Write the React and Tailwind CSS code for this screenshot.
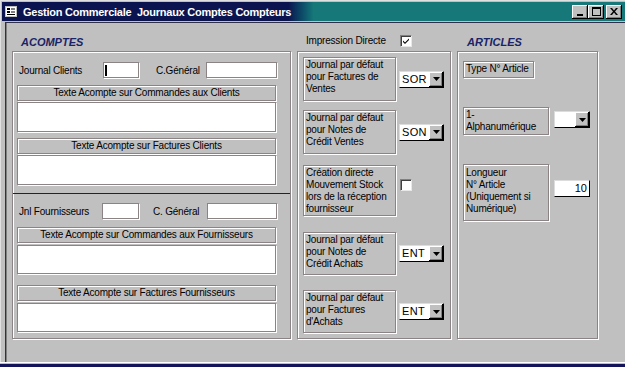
import React from "react";

const etched = "border border-[#8c8484] shadow-[inset_1px_1px_0_#fff,1px_1px_0_#fff]";
const field = "bg-white border border-[#8c8484] shadow-[1px_1px_0_#fff]";

function TitleButton({ children, className = "" }) {
  return (
    <div className={"w-[16px] h-[14px] bg-[#c0c0c0] flex items-center justify-center shadow-[inset_-1px_-1px_0_#000,inset_1px_1px_0_#fff,inset_-2px_-2px_0_#808080] " + className}>
      {children}
    </div>
  );
}

function Combo({ value, w = "w-[45px]" }) {
  return (
    <div className={"h-[17px] bg-white flex border border-[#dcdcdc] border-b-black border-r-black " + w}>
      <div className="flex-1 text-[11px] leading-[15px] pl-[2px] tracking-[0.3px]">{value}</div>
      <div className="w-[14px] h-[15px] bg-[#c0c0c0] flex items-center justify-center shadow-[inset_-1px_-1px_0_#000,inset_1px_1px_0_#fff,inset_-2px_-2px_0_#808080]">
        <svg width="7" height="4" viewBox="0 0 7 4"><path d="M0 0h7L3.5 4z" fill="#000" /></svg>
      </div>
    </div>
  );
}

function Check({ checked }) {
  return (
    <div className="w-[12px] h-[12px] bg-white border border-[#808080] border-b-[#e8e8e8] border-r-[#e8e8e8] shadow-[inset_1px_1px_0_#404040] flex items-center justify-center">
      {checked && (
        <svg width="8" height="8" viewBox="0 0 8 8">
          <path d="M1 3.5 L3 5.5 L7 1.5 L7 3 L3 7 L1 5z" fill="#000" />
        </svg>
      )}
    </div>
  );
}

function Header({ children, className = "" }) {
  return (
    <div className={"ml-[4px] w-[259px] h-[16px] flex items-center justify-center leading-[12px] tracking-[-0.2px] " + etched + " " + className}>
      {children}
    </div>
  );
}

function Area({ className = "" }) {
  return <div className={"ml-[4px] w-[259px] " + field + " " + className} />;
}

function LabelBox({ children, className = "" }) {
  return (
    <div className={"pl-[2px] pt-[1px] leading-[12px] whitespace-nowrap tracking-[-0.2px] " + etched + " " + className}>
      {children}
    </div>
  );
}

export default function App() {
  return (
    <div className="w-[625px] h-[367px] bg-[#c0c0c0] overflow-hidden font-['Liberation_Sans',Arial,sans-serif] text-[10px] text-black">
      <div className="h-[362px] flex flex-col pt-[2px] pl-[2px] shadow-[inset_1px_1px_0_#e0e0e0]">
        {/* Title bar */}
        <div className="h-[19px] flex items-center bg-linear-to-r from-[#0c1450] from-[46%] to-[#167878] to-[50%]">
          <svg className="ml-[3px]" width="12" height="11" viewBox="0 0 12 11">
            <rect x="0.5" y="0.5" width="11" height="10" fill="#fff" stroke="#c0c0c0" />
            <rect x="2" y="2" width="3" height="2" fill="#000" />
            <rect x="6" y="2" width="4" height="2" fill="#808080" />
            <rect x="2" y="5" width="3" height="2" fill="#000" />
            <rect x="6" y="5" width="4" height="2" fill="#808080" />
            <rect x="2" y="8" width="8" height="1" fill="#000" />
          </svg>
          <div className="ml-[6px] text-white font-bold text-[11px] tracking-[-0.25px] whitespace-pre leading-[14px]">
            Gestion Commerciale  Journaux Comptes Compteurs
          </div>
          <div className="ml-auto flex items-center mr-[3px]">
            <TitleButton>
              <svg width="8" height="8" viewBox="0 0 8 8"><rect x="1" y="6" width="6" height="2" fill="#000" /></svg>
            </TitleButton>
            <TitleButton>
              <svg width="9" height="9" viewBox="0 0 9 9"><path d="M0 0h9v9H0z M1 2v6h7V2z" fill="#000" fillRule="evenodd" /></svg>
            </TitleButton>
            <TitleButton className="ml-[2px]">
              <svg width="8" height="7" viewBox="0 0 8 7">
                <path d="M0 0h2l2 2.5L6 0h2L5 3.5 8 7H6L4 4.5 2 7H0l3-3.5z" fill="#000" />
              </svg>
            </TitleButton>
          </div>
        </div>
        <div className="h-px" />
        {/* Client area */}
        <div className="flex-1 ml-[3px] border-t border-l border-[#30304a] shadow-[inset_1px_0_0_#808080] pl-[6px] flex gap-[6px]">
          {/* Left column */}
          <div className="w-[279px] flex flex-col">
            <div className="h-[28px] flex items-end pb-[3px] pl-[9px]">
              <span className="text-[11px] leading-[12px] font-bold italic text-[#1a2468]">ACOMPTES</span>
            </div>
            <div className={"h-[288px] flex flex-col " + etched}>
              <div className="mt-[10px] h-[16px] flex items-center pl-[6px] tracking-[-0.2px]">
                <span className="w-[84px]">Journal Clients</span>
                <div className={"w-[36px] h-[16px] flex items-center pl-[1px] " + field}>
                  <div className="w-[2px] h-[11px] bg-black" />
                </div>
                <span className="ml-[17px] w-[50px]">C.Général</span>
                <div className={"w-[71px] h-[16px] " + field} />
              </div>
              <Header className="mt-[7px]">Texte Acompte sur Commandes aux Clients</Header>
              <Area className="mt-[1px] h-[30px]" />
              <Header className="mt-[6px]">Texte Acompte sur Factures Clients</Header>
              <Area className="mt-[1px] h-[30px]" />
              <div className="mt-[8px] h-px bg-[#1c1c58]" />
              <div className="mt-[9px] h-[16px] flex items-center pl-[6px] tracking-[-0.2px]">
                <span className="w-[83px]">Jnl Fournisseurs</span>
                <div className={"w-[37px] h-[16px] " + field} />
                <span className="ml-[14px] w-[54px]">C. Général</span>
                <div className={"w-[70px] h-[16px] " + field} />
              </div>
              <Header className="mt-[8px]">Texte Acompte sur Commandes aux Fournisseurs</Header>
              <Area className="mt-[2px] h-[29px]" />
              <Header className="mt-[11px]">Texte Acompte sur Factures Fournisseurs</Header>
              <Area className="mt-[2px] h-[29px]" />
            </div>
          </div>

          {/* Middle column */}
          <div className="w-[154px] flex flex-col">
            <div className="h-[28px] flex items-end pb-[4px] pl-[9px]">
              <span className="w-[94px] leading-[12px] tracking-[-0.2px]">Impression Directe</span>
              <Check checked />
            </div>
            <div className={"h-[288px] flex flex-col pl-[5px] " + etched}>
              <div className="mt-[5px] flex items-center">
                <LabelBox className="w-[93px] h-[44px]">Journal par défaut<br />pour Factures de<br />Ventes</LabelBox>
                <div className="ml-[3px]"><Combo value="SOR" /></div>
              </div>
              <div className="mt-[9px] flex items-center">
                <LabelBox className="w-[93px] h-[44px]">Journal par défaut<br />pour Notes de<br />Crédit Ventes</LabelBox>
                <div className="ml-[3px]"><Combo value="SON" /></div>
              </div>
              <div className="mt-[11px] flex items-start">
                <LabelBox className="w-[93px] h-[51px]">Création directe<br />Mouvement Stock<br />lors de la réception<br />fournisseur</LabelBox>
                <div className="ml-[4px] mt-[14px]"><Check /></div>
              </div>
              <div className="mt-[16px] flex items-center">
                <LabelBox className="w-[93px] h-[43px]">Journal par défaut<br />pour Notes de<br />Crédit Achats</LabelBox>
                <div className="ml-[3px]"><Combo value="ENT" /></div>
              </div>
              <div className="mt-[15px] flex items-center">
                <LabelBox className="w-[93px] h-[43px]">Journal par défaut<br />pour Factures<br />d'Achats</LabelBox>
                <div className="ml-[3px]"><Combo value="ENT" /></div>
              </div>
            </div>
          </div>

          {/* Right column */}
          <div className="w-[141px] flex flex-col">
            <div className="h-[28px] flex items-end pb-[3px] pl-[10px]">
              <span className="text-[11px] leading-[12px] font-bold italic text-[#1a2468]">ARTICLES</span>
            </div>
            <div className={"h-[288px] flex flex-col pl-[5px] " + etched}>
              <LabelBox className="mt-[9px] w-[71px] h-[17px]">Type N° Article</LabelBox>
              <div className="mt-[29px] flex items-start">
                <LabelBox className="w-[86px] h-[28px]">1-<br />Alphanumérique</LabelBox>
                <div className="ml-[5px] mt-[4px]"><Combo value="" w="w-[36px]" /></div>
              </div>
              <div className="mt-[29px] flex items-start">
                <LabelBox className="w-[86px] h-[57px] pt-[2px]">Longueur<br />N° Article<br />(Uniquement si<br />Numérique)</LabelBox>
                <div className="ml-[5px] mt-[16px] w-[36px] h-[17px] bg-white border border-[#dcdcdc] border-b-black border-r-black text-right pr-[2px] text-[11px] leading-[15px]">10</div>
              </div>
            </div>
          </div>
        </div>
      </div>
      <div className="h-px bg-white" />
      <div className="h-[1px] bg-[#c0c0c0]" />
      <div className="h-[3px] bg-[#14145a]" />
    </div>
  );
}
